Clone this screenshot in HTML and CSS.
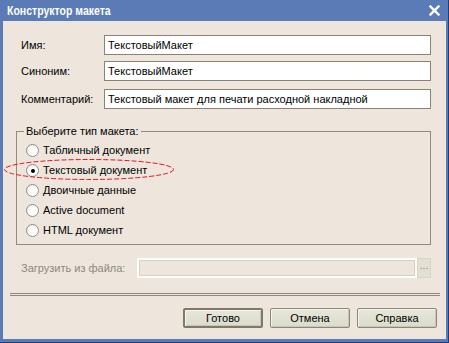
FILE: index.html
```html
<!DOCTYPE html>
<html lang="ru">
<head>
    <meta charset="UTF-8">
    <title>Конструктор макета</title>
    <link rel="stylesheet" href="styles.css">
</head>
<body>
    <div class="window">
        <div class="titlebar">
            <span class="title">Конструктор макета</span>
            <svg class="close" width="11" height="11" viewBox="0 0 11 11">
                <path d="M1.5 1.5 L9.5 9.5 M9.5 1.5 L1.5 9.5" stroke="#fff" stroke-width="2.4" stroke-linecap="square"/>
            </svg>
        </div>

        <div class="content">
            <div class="field-row">
                <span class="field-label">Имя:</span>
                <div class="textbox">ТекстовыйМакет</div>
            </div>
            <div class="field-row">
                <span class="field-label">Синоним:</span>
                <div class="textbox">ТекстовыйМакет</div>
            </div>
            <div class="field-row comment-row">
                <span class="field-label">Комментарий:</span>
                <div class="textbox">Текстовый макет для печати расходной накладной</div>
            </div>

            <fieldset class="type-group">
                <legend>Выберите тип макета:</legend>
                <div class="radio-row"><span class="radio"></span>Табличный документ</div>
                <div class="radio-row marked">
                    <span class="radio checked"></span>Текстовый документ
                    <svg class="mark" width="172" height="23" viewBox="0 0 172 23">
                        <ellipse cx="86" cy="11.5" rx="84.5" ry="10" fill="none" stroke="#e8141e" stroke-width="1" stroke-dasharray="5 2"/>
                    </svg>
                </div>
                <div class="radio-row"><span class="radio"></span>Двоичные данные</div>
                <div class="radio-row"><span class="radio"></span>Active document</div>
                <div class="radio-row"><span class="radio"></span>HTML документ</div>
            </fieldset>

            <div class="load-row">
                <span class="load-label">Загрузить из файла:</span>
                <div class="load-box"></div>
                <span class="browse">...</span>
            </div>

            <div class="separator"></div>

            <div class="buttons">
                <button class="btn btn-default">Готово</button>
                <button class="btn">Отмена</button>
                <button class="btn">Справка</button>
            </div>
        </div>
    </div>
</body>
</html>
```

FILE: styles.css
```css
body {
    margin: 0;
    font-family: "Liberation Sans", Arial, sans-serif;
    font-size: 11px;
    color: #000;
}

.window {
    width: 449px;
    height: 343px;
    box-sizing: border-box;
    display: flex;
    flex-direction: column;
    background-color: #5a7bb6;
    padding: 0 3px 4px 3px;
    box-shadow: inset -1px -1px 0 #1f3c78;
}

.titlebar {
    height: 21px;
    display: flex;
    align-items: center;
    justify-content: space-between;
    padding: 0 6px 0 4px;
}

.title {
    color: #fff;
    font-weight: bold;
    font-size: 12.5px;
    padding-top: 1px;
    transform: scaleX(0.84); /* XP caption font is narrower */
    transform-origin: left center;
}

.close {
    display: block;
}

.content {
    flex: 1;
    background-color: #eee6dd;
    padding: 14px 15px 0 18px;
    display: flex;
    flex-direction: column;
}

/* name / synonym / comment rows */
.field-row {
    display: flex;
    align-items: center;
    height: 20px;
    margin-bottom: 6px;
}

.comment-row {
    margin-top: 2px;
    margin-bottom: 0;
}

.field-label {
    width: 83px;
}

.textbox {
    flex: 1;
    height: 20px;
    box-sizing: border-box;
    border: 1px solid #8a8372;
    background-color: #fff;
    padding: 0 3px;
    line-height: 18px;
    white-space: nowrap;
}

/* layout type group */
.type-group {
    position: relative;
    margin: 15px 0 0 -5px;
    padding: 2px 9px 4px 9px;
    border: 1px solid #938c7c;
    min-width: 0;
}

.type-group legend {
    padding: 0 2px;
    margin-left: -2px;
    line-height: 14px;
}

.radio-row {
    position: relative;
    display: flex;
    align-items: center;
    height: 20px;
}

.radio {
    width: 11px;
    height: 11px;
    border: 1px solid #8f8f88;
    border-radius: 50%;
    background: radial-gradient(circle at 65% 65%, #fff 40%, #e4e2da 100%);
    margin-right: 4px;
    position: relative;
}

.radio.checked::after {
    content: "";
    position: absolute;
    left: 4px;
    top: 4px;
    width: 4px;
    height: 4px;
    border-radius: 50%;
    background-color: #000;
}

.mark {
    position: absolute;
    left: -23px;
    top: -2px;
}

/* load from file */
.load-row {
    display: flex;
    align-items: center;
    height: 20px;
    margin-top: 13px;
    color: #8d887d;
}

.load-label {
    width: 116px;
}

.load-box {
    flex: 1;
    height: 20px;
    box-sizing: border-box;
    border: 2px solid #fff;
    outline: 1px solid #d8d0c2;
    outline-offset: -3px;
    background-color: #eee6dd;
}

.browse {
    width: 14px;
    height: 20px;
    box-sizing: border-box;
    background-color: #e2e0d3;
    border: 1px solid #d8d4c6;
    font-size: 10px;
    line-height: 14px;
    text-align: center;
    color: #8d887d;
}

.separator {
    height: 1px;
    margin: 15px -9px 0 -11px;
    border-top: 1px solid #8e887a;
    border-bottom: 1px solid #8e887a;
}

/* dialog buttons */
.buttons {
    display: flex;
    justify-content: flex-end;
    gap: 7px;
    margin: 12px -6px 0 0;
}

.btn {
    width: 80px;
    height: 20px;
    box-sizing: border-box;
    font-family: inherit;
    font-size: 11px;
    color: #000;
    padding: 0;
    background: linear-gradient(#e6e6da, #dcdccd);
    border: 1px solid #8d8777;
    border-radius: 2px;
    box-shadow: inset 1px 1px 0 #f6f6ee, inset -1px -1px 0 #c8c6b6;
}

.btn-default {
    border: 2px solid #7f7968;
}
```
